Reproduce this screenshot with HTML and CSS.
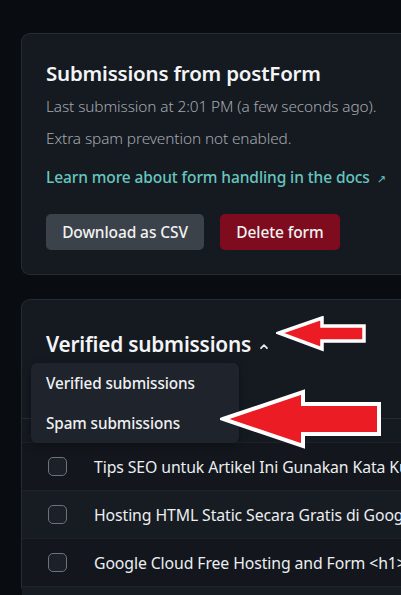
FILE: index.html
```html
<!DOCTYPE html>
<html lang="en">
<head>
<meta charset="utf-8">
<title>Submissions</title>
<link rel="stylesheet" href="styles.css">
</head>
<body>
<div class="page">
  <section class="card info">
    <h1 class="title">Submissions from postForm</h1>
    <p class="meta">Last submission at 2:01 PM (a few seconds ago).</p>
    <p class="meta">Extra spam prevention not enabled.</p>
    <a class="doclink" href="#">Learn more about form handling in the docs <span class="ext">↗</span></a>
    <div class="actions">
      <button class="btn btn-gray">Download as CSV</button>
      <button class="btn btn-red">Delete form</button>
    </div>
  </section>

  <section class="card subs">
    <div class="subs-head">
      <h2 class="subs-title">Verified submissions</h2>
      <svg class="chev" width="10" height="7" viewBox="0 0 10 7"><path d="M2 5.2 L5 2.2 L8 5.2" fill="none" stroke="#e8eaed" stroke-width="1.8" stroke-linecap="round" stroke-linejoin="round"/></svg>
    </div>
    <div class="table">
      <div class="thead"></div>
      <div class="row odd"><span class="check"></span><span class="rtext">Tips SEO untuk Artikel Ini Gunakan Kata Kunci</span></div>
      <div class="row"><span class="check"></span><span class="rtext">Hosting HTML Static Secara Gratis di Google</span></div>
      <div class="row odd"><span class="check"></span><span class="rtext">Google Cloud Free Hosting and Form &lt;h1&gt;</span></div>
      <div class="row"></div>
    </div>
    <div class="menu">
      <div class="menu-item">Verified submissions</div>
      <div class="menu-item">Spam submissions</div>
    </div>
  </section>
</div>

<svg class="arrow arrow1" width="96" height="38" viewBox="0 0 96 38">
  <path d="M3 17 L46 2 L46 10 L88 10 L88 25 L46 25 L46 33 Z" fill="#ec1c24" stroke="#ffffff" stroke-width="3.5" stroke-linejoin="miter"/>
</svg>
<svg class="arrow arrow2" width="164" height="60" viewBox="0 0 164 60">
  <path d="M3 30 L83 3 L83 15 L159 15 L159 45 L83 45 L83 57 Z" fill="#ec1c24" stroke="#ffffff" stroke-width="4" stroke-linejoin="miter"/>
</svg>
</body>
</html>
```

FILE: styles.css
```css
* { box-sizing: border-box; }
html, body {
  margin: 0;
  padding: 0;
  background: #090c10;
  overflow: hidden;
  height: 595px;
}
body {
  font-family: "Noto Sans", "Open Sans", "DejaVu Sans", sans-serif;
  color: #e6e8eb;
  position: relative;
}
.page {
  padding: 33px 0 0 21px;
  display: flex;
  flex-direction: column;
  gap: 24px;
}
.card {
  background: #151a21;
  border: 1px solid #272c34;
  border-right: none;
  border-radius: 9px 0 0 9px;
  margin-right: -20px;
}
.info {
  padding: 25px 24px 24px 24px;
}
.title {
  margin: 0;
  font-size: 20.5px;
  line-height: 28px;
  font-weight: 600;
  color: #f3f4f6;
  letter-spacing: -0.2px;
}
.meta {
  margin: 8px 0 0 0;
  font-size: 15.4px;
  line-height: 24px;
  font-weight: 300;
  color: #a3a8af;
  letter-spacing: -0.1px;
}
.meta + .meta { margin-top: 8px; }
.doclink {
  display: block;
  margin-top: 14px;
  font-size: 15.5px;
  line-height: 24px;
  font-weight: 500;
  color: #66c6bf;
  text-decoration: none;
  letter-spacing: -0.1px;
}
.ext { font-size: 11px; color: #66c6bf; margin-left: 3px; }
.actions {
  display: flex;
  gap: 16px;
  margin-top: 23px;
}
.btn {
  font-family: inherit;
  height: 36px;
  border: none;
  border-radius: 5px;
  padding: 0;
  font-size: 15.5px;
  font-weight: 500;
  color: #f1f2f4;
  letter-spacing: -0.1px;
}
.btn-gray { background: #3c424a; width: 158px; }
.btn-red { background: #7e0b1e; width: 120px; }

.subs {
  position: relative;
  height: 296px;
  padding-top: 28px;
}
.subs-head {
  display: flex;
  align-items: center;
  gap: 8px;
  padding-left: 24px;
  height: 32px;
}
.subs-title {
  margin: 0;
  font-size: 20.8px;
  font-weight: 600;
  color: #f3f4f6;
  letter-spacing: -0.2px;
}
.chev { margin-top: 4px; }
.table {
  margin-top: 58px;
  border-top: 1px solid #262b33;
  height: 178px;
  overflow: hidden;
}
.thead { height: 23px; }
.row {
  height: 48px;
  display: flex;
  align-items: center;
  gap: 27px;
  padding-left: 26px;
  border-top: 1px solid #1d2229;
  background: #171c23;
  white-space: nowrap;
  overflow: hidden;
}
.row.odd { background: #13171d; }
.check {
  flex: none;
  width: 19px;
  height: 19px;
  border: 1.5px solid #6d737c;
  border-radius: 5px;
  background: #1c2128;
}
.rtext {
  font-size: 15.8px;
  font-weight: 400;
  color: #eceef0;
  letter-spacing: -0.1px;
}
.menu {
  position: absolute;
  top: 63px;
  left: 9px;
  width: 208px;
  height: 80px;
  background: #1f242c;
  border-radius: 6px;
  padding: 0 15px;
  display: flex;
  flex-direction: column;
  justify-content: space-around;
  box-shadow: 0 2px 8px rgba(0,0,0,0.35);
}
.menu-item {
  font-size: 15.3px;
  font-weight: 500;
  color: #eef0f2;
  letter-spacing: -0.1px;
}
.arrow { position: absolute; }
.arrow1 { left: 276px; top: 316px; }
.arrow2 { left: 220px; top: 389px; }
```
